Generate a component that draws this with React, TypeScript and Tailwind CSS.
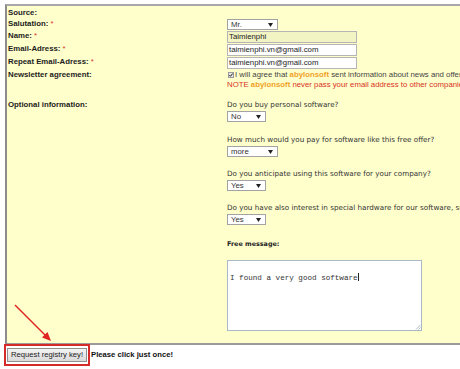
import { FC, ReactNode } from "react"

const Star: FC = () => <span className="font-normal text-[#d43a2a]"> *</span>

const Label: FC<{ children: ReactNode }> = ({ children }) => (
  <div className="w-[220px] shrink-0 pl-[1px] text-[7.8px] font-bold leading-[10px] text-[#1c1c1c]">{children}</div>
)

const Select: FC<{ value: string; w: string }> = ({ value, w }) => (
  <div className={`${w} flex h-[11px] items-center justify-between border border-[#a3a3a3] bg-white pl-[3px] pr-[4px]`}>
    <span className="text-[7.8px] leading-none text-[#333]">{value}</span>
    <svg width="5" height="4" viewBox="0 0 5 4">
      <path d="M0 0H5L2.5 4Z" fill="#222" />
    </svg>
  </div>
)

const Input: FC<{ value: string; bg?: string }> = ({ value, bg = "bg-white" }) => (
  <div className={`${bg} flex h-[12px] w-[130px] items-center border border-[#b5b5b5] pl-[1px] text-[7.8px] leading-none text-[#222]`}>
    {value}
  </div>
)

const Question: FC<{ text: string; value: string; w: string; mt: string }> = ({ text, value, w, mt }) => (
  <div className={mt}>
    <div className="font-['DejaVu_Sans',Verdana,sans-serif] text-[7.2px] leading-[10px] text-[#333]">{text}</div>
    <div className="mt-[1px]">
      <Select value={value} w={w} />
    </div>
  </div>
)

const App: FC = () => {
  return (
    <div className="relative h-[369px] w-[460px] overflow-hidden whitespace-nowrap bg-white font-['Liberation_Sans',Arial,sans-serif]">
      <div className="ml-[5px] mt-[4px] h-[341px] w-[480px] border-b-2 border-l-2 border-t-2 border-b-[#9a9a9a] border-l-[#8c8c8c] border-t-[#a8a8a8] bg-[#ffffcc]">
        <div className="mt-[2px] flex h-[10px]">
          <Label>Source:</Label>
        </div>
        <div className="mt-[1px] flex h-[11px]">
          <Label>
            Salutation:<Star />
          </Label>
          <Select value="Mr." w="w-[51px]" />
        </div>
        <div className="mt-[1px] flex h-[12px]">
          <Label>
            Name:<Star />
          </Label>
          <Input value="Taimienphi" bg="bg-[#f2f4c4]" />
        </div>
        <div className="mt-[1px] flex h-[12px]">
          <Label>
            Email-Adress:<Star />
          </Label>
          <Input value="taimienphi.vn@gmail.com" />
        </div>
        <div className="mt-[1px] flex h-[12px]">
          <Label>
            Repeat Email-Adress:<Star />
          </Label>
          <Input value="taimienphi.vn@gmail.com" />
        </div>
        <div className="mt-[1px] flex">
          <Label>Newsletter agreement:</Label>
          <div className="text-[7.8px] leading-[10px] text-[#444]">
            <div className="flex items-center">
              <svg width="6" height="6" viewBox="0 0 6 6" className="ml-[1px] mr-[1px]">
                <rect x="0.5" y="0.5" width="5" height="5" fill="#e8e8e8" stroke="#9a9a9a" />
                <path d="M1.3 3.1L2.5 4.3L4.7 1.5" stroke="#222" strokeWidth="1" fill="none" />
              </svg>
              <span>
                {" "}I will agree that <b className="text-[#f0a228]">abylonsoft</b> sent information about news and offers
              </span>
            </div>
            <div className="text-[#d8321e]">
              NOTE <b className="text-[#f0a228]">abylonsoft</b> never pass your email address to other companies
            </div>
          </div>
        </div>
        <div className="mt-[10px] flex">
          <div className="w-[220px] shrink-0 pl-[1px] text-[7.8px] font-bold leading-[10px] text-[#1c1c1c]">
            Optional information:
          </div>
          <div>
            <Question text="Do you buy personal software?" value="No" w="w-[39px]" mt="mt-0" />
            <Question text="How much would you pay for software like this free offer?" value="more" w="w-[51px]" mt="mt-[13px]" />
            <Question text="Do you anticipate using this software for your company?" value="Yes" w="w-[39px]" mt="mt-[12px]" />
            <Question
              text="Do you have also interest in special hardware for our software, such as USB sticks?"
              value="Yes"
              w="w-[39px]"
              mt="mt-[12px]"
            />
            <div className="mt-[14px] font-['DejaVu_Sans',Verdana,sans-serif] text-[6.4px] font-bold leading-[10px] text-[#222]">
              Free message:
            </div>
            <div className="relative mt-[11px] h-[71px] w-[195px] border border-[#a9bac6] bg-white pl-[2px] pt-[2px]">
              <span className="font-['Liberation_Mono','Courier_New',monospace] text-[7.6px] leading-[9px] text-[#333]">
                I found a very good software
              </span>
              <span className="ml-[0.5px] inline-block h-[8px] w-px translate-y-[1px] bg-[#222]" />
              <svg width="6" height="6" viewBox="0 0 6 6" className="absolute bottom-0 right-0">
                <path d="M5.5 1L1 5.5M5.5 3.5L3.5 5.5" stroke="#9aa" strokeWidth="0.8" />
              </svg>
            </div>
          </div>
        </div>
      </div>

      <div className="-mt-[1px] flex items-center">
        <div className="ml-[4px] h-[22px] w-[86px] border-2 border-[#d42a2a] pl-[1px] pt-[2px]">
          <div className="flex h-[14px] w-[80px] items-center justify-center border border-[#8f8f8f] bg-gradient-to-b from-[#f4f4f4] to-[#dadada] text-[7.7px] leading-none text-[#222]">
            Request registry key!
          </div>
        </div>
        <span className="ml-[1px] text-[7.7px] font-bold text-[#111]">Please click just once!</span>
      </div>

      <svg className="absolute left-0 top-0" width="460" height="369" viewBox="0 0 460 369">
        <line x1="15" y1="305" x2="46" y2="336" stroke="#e0231f" strokeWidth="1.4" />
        <path d="M51 341L42 337.5L47.5 332Z" fill="#e0231f" />
      </svg>
    </div>
  )
}

export default App
